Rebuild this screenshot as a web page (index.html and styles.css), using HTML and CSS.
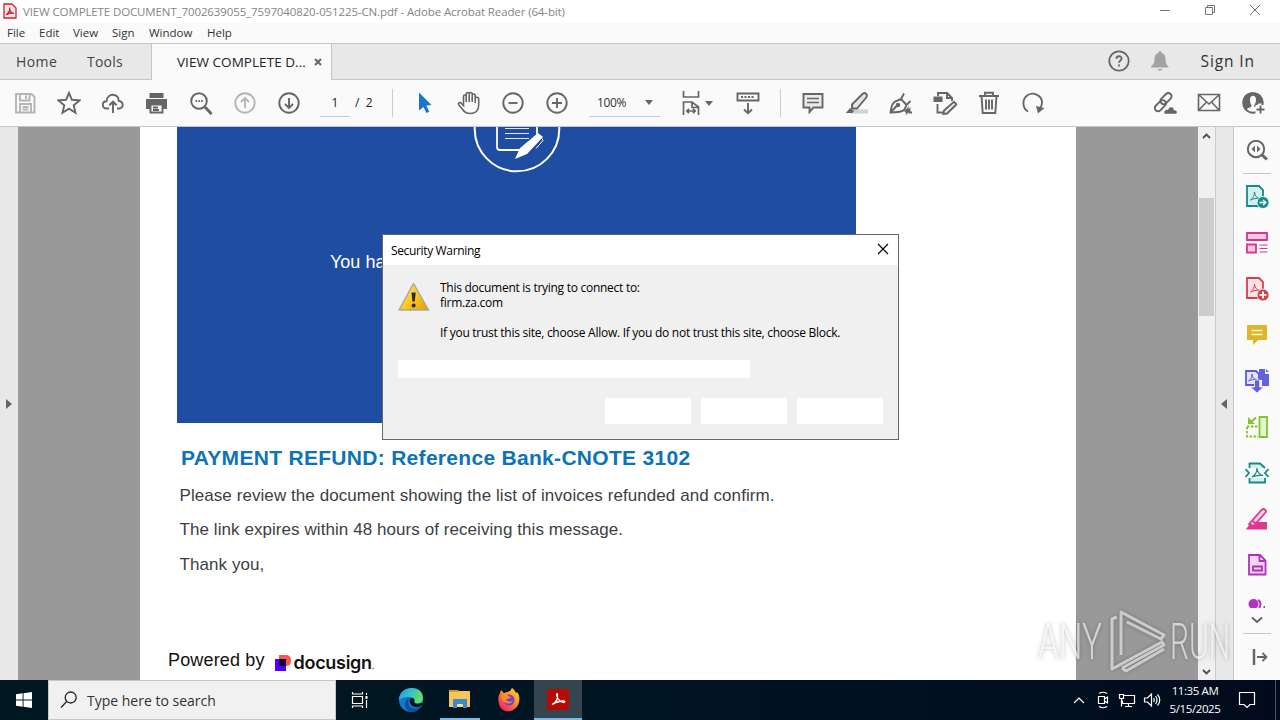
FILE: index.html
```html
<!DOCTYPE html>
<html lang="en">
<head>
    <meta charset="UTF-8">
    <title>Adobe Acrobat Reader</title>
    <link rel="stylesheet" href="styles.css">
</head>
<body>
<div class="screen">

    <header class="titlebar">
        <svg class="app-icon" width="14" height="16" viewBox="0 0 14 16"><path d="M1 1h8l4 4v10H1z" fill="#ffe9e8" stroke="#d3202c" stroke-width="1.3"/><path d="M3 12c3-2 4-5 3.6-7.500C6.500 8 8 10 11 10.300 8 9.500 5 10.500 3 12z" fill="none" stroke="#d3202c" stroke-width="1.300"/></svg>
        <span class="window-title">VIEW COMPLETE DOCUMENT_7002639055_7597040820-051225-CN.pdf - Adobe Acrobat Reader (64-bit)</span>
        <div class="window-buttons">
            <svg width="12" height="12" viewBox="0 0 12 12"><path d="M1 6.500h10"/></svg>
            <svg width="12" height="12" viewBox="0 0 12 12"><path d="M1.500 3.500h7v7h-7zM3.500 3.500v-2h7v7h-2"/></svg>
            <svg width="12" height="12" viewBox="0 0 12 12"><path d="M1 1l10 10M11 1L1 11"/></svg>
        </div>
    </header>

    <nav class="menubar">
        <span class="m-file">File</span><span class="m-edit">Edit</span><span class="m-view">View</span><span class="m-sign">Sign</span><span class="m-window">Window</span><span>Help</span>
    </nav>

    <div class="tabs">
        <span class="tab-home">Home</span>
        <span class="tab-tools">Tools</span>
        <div class="tab-active">
            <span class="tab-label">VIEW COMPLETE D...</span>
            <svg width="8" height="8" viewBox="0 0 8 8"><path d="M1 1l6 6M7 1L1 7" stroke="#666" stroke-width="2"/></svg>
        </div>
        <div class="account">
            <svg width="24" height="24" viewBox="0 0 24 24"><circle cx="12" cy="12" r="9.700" fill="none" stroke="#666" stroke-width="1.800"/><path d="M9.300 9.800c.1-3.400 5.400-3.300 5.300-.2-.1 2-2.500 1.900-2.500 4.200M12 15.500v2" fill="none" stroke="#666" stroke-width="1.800"/></svg>
            <svg class="bell" width="18" height="20" viewBox="0 0 18 20"><path d="M9 0c1 0 1.500.8 1.500 1.700C13.500 2.500 14.500 5 14.500 8c0 4 .8 5.500 3 7.500v1H0v-1C2.500 13.500 3.500 12 3.500 8c0-3 1-5.500 4-6.300C7.500.8 8 0 9 0zM6.500 18h5c-.5 2-4.500 2-5 0z" fill="#a3a3a3"/></svg>
            <span class="sign-in">Sign In</span>
        </div>
    </div>

    <div class="toolbar">
        <div class="tool dim"><svg viewBox="0 0 24 24"><path d="M3 3h15.500L21.500 6v15.500H3zM7 3v6.500h9.500V3M13 4.500V8M7 21v-8h11v8M9.500 16h6M9.500 18.500h6"/></svg></div>
        <div class="tool"><svg viewBox="0 0 24 24"><path d="M12 1.800l2.900 7 7.600.6-5.800 4.900 1.800 7.400-6.500-4-6.500 4 1.800-7.400-5.800-4.900 7.600-.6z"/></svg></div>
        <div class="tool"><svg viewBox="0 0 24 24"><path d="M8 17.500H6C.5 17.500.5 10.500 5.500 10.300 5.500 6.500 9 3 13 4c3 .5 4.700 3 4.700 6 5.300.5 5.300 7.500.3 7.500h-2M12 22V11M8.300 14.300L12 10.700l3.700 3.600"/></svg></div>
        <div class="tool"><svg viewBox="0 0 24 24"><path d="M4.500 2h14v5h-14z" fill="#666" stroke="none"/><path d="M1 8h21v10h-4v-4H5v4H1z" fill="#666" stroke="none"/><path d="M5.500 13.500h12v8h-12zM8 16.500h5M8 19h6"/></svg></div>
        <div class="tool"><svg viewBox="0 0 24 24"><circle cx="10" cy="10" r="7.800"/><path d="M16 16l6.500 7" stroke-width="2.800"/><path d="M6.500 10h1.600M9.300 10h1.600M12.100 10h1.600"/></svg></div>
        <div class="tool dim"><svg viewBox="0 0 24 24"><circle cx="12" cy="12" r="9.700"/><path d="M12 17V7M8 11l4-4 4 4"/></svg></div>
        <div class="tool"><svg viewBox="0 0 24 24"><circle cx="12" cy="12" r="9.700"/><path d="M12 7v10M8 13l4 4 4-4"/></svg></div>
        <div class="page-nav"><span class="page-input">1</span><span class="page-total">/&nbsp; 2</span></div>
        <div class="divider"></div>
        <div class="tool"><svg viewBox="0 0 24 24"><path d="M6 1.500L18.500 14l-5.200.5 3 6.200-3 1.300-2.700-6L6 19.500z" fill="#1c73cc" stroke="none"/></svg></div>
        <div class="tool"><svg viewBox="0 0 24 24"><path d="M6.500 14.500V5.500c0-2 2.700-2 2.700 0V11 3c0-2 3-2 3 0v8-8c0-2 3-2 3 0v8-6.500c0-2 3-2 3 0V12 7.500c0-2 3.500-1.500 3.500 0V14c0 5.500-3.500 8.500-8.500 8.500-4 0-6-1.500-7.500-4L1.800 14C.8 12 3 10.500 4.500 12.500z" stroke-width="1.600"/></svg></div>
        <div class="tool"><svg viewBox="0 0 24 24"><circle cx="12" cy="12" r="9.700"/><path d="M7.500 12h9"/></svg></div>
        <div class="tool"><svg viewBox="0 0 24 24"><circle cx="12" cy="12" r="9.700"/><path d="M7 12h10M12 7v10"/></svg></div>
        <div class="zoom"><span>100%</span><i class="caret"></i></div>
        <div class="tool fit"><svg viewBox="0 0 24 24"><path d="M4.500 0v6h15V0M4.500 24V11h8.500l6.500 5v8M13 11v5.500h6M8 20h8M10 17.800L7.800 20l2.200 2.200M14 17.800l2.200 2.200-2.200 2.200" stroke-width="1.700"/></svg><i class="caret"></i></div>
        <div class="tool"><svg viewBox="0 0 24 24"><path d="M1.500 2.500h21v7h-21zM12 12v10M8 18.500l4 3.700 4-3.700"/><path d="M5 6h14" stroke-dasharray="2 1.500"/></svg></div>
        <div class="divider"></div>
        <div class="tool"><svg viewBox="0 0 24 24"><path d="M2.500 3h19v13.500h-9L8.500 21v-4.500h-6z" fill="#ebebeb"/><path d="M6 7.500h12M6 11.500h12" stroke-width="1.300"/></svg></div>
        <div class="tool"><svg viewBox="0 0 24 24"><path d="M9 18.500h14v4H5z" fill="#d2d2d2" stroke="none"/><path d="M7 13.500L17.500 3c2.500-2.300 5.700.5 3.700 3.500L12 17.500H7.500zM7 14v3.500h4" fill="#e6e6e6"/><path d="M5 17l4 3-1.500 2H.8z" fill="#666" stroke="none"/></svg></div>
        <div class="tool"><svg viewBox="0 0 24 24"><path d="M1.500 21.500c.5-5 1.500-9 4.500-11l6-2.500 5.500 6-2 4.500c-2 2-8 3-14 3zM2 21l6-6.500M12 8l3-5.500M17.500 14l4-4M16 21l2.500-3-.5 3.500 2.500-3v3h2.500"/><circle cx="9" cy="14" r="1.300" fill="#666"/></svg></div>
        <div class="tool"><svg viewBox="0 0 24 24"><path d="M.5 5.500h9v5.500h-9z" fill="#666" stroke="none"/><path d="M5 5V2h9l5 5v3M14 2v5h5M4.500 13v8.500h5.500"/><path d="M21 10.800l2.500 2.500L14 22.500l-3.700.5.700-3.500z" fill="#eee"/></svg></div>
        <div class="tool"><svg viewBox="0 0 24 24"><path d="M2 5h20M8 4V1.700h8V4M4.500 5l1.200 17h12.600l1.200-17M9 8.500v10M12 8.500v10M15 8.500v10"/></svg></div>
        <div class="tool"><svg viewBox="0 0 24 24"><path d="M7 20.500C1 17 1 8 6.500 4.300c6-4 14.500.2 14.500 7.200 0 2-.5 3.500-1.500 5"/><path d="M15 15l8.500 2-6.500 5.500z" fill="#666" stroke="none"/></svg></div>
        <div class="share">
            <div class="tool"><svg viewBox="0 0 24 24"><g transform="rotate(-45 10 11)"><rect x="8" y="7.500" width="13" height="6.500" rx="3.200"/><rect x="-1" y="8.500" width="13" height="6.500" rx="3.200"/></g><path d="M11 22.500c0-3 1.500-4.500 4-4 1.500-4 6-3 6 .5 4 0 4 4 1 4H12z" fill="#666" stroke="#fafafa" stroke-width=".5"/></svg></div>
            <div class="tool"><svg viewBox="0 0 24 24"><path d="M1.500 3.500h21v16h-21zM2 4l10 9L22 4M2 19l7.500-8M22 19l-7.500-8" stroke-width="1.600"/></svg></div>
            <div class="tool"><svg viewBox="0 0 24 24"><path d="M10 1.500c9-1 13 5 12 11h-4.500L15 16l-2-.5c-1-.5 2-2 2-7 0-5-6-5-6 0s2 5.500 1.500 7c-.500 1-4 1-5 3.500l2.500 2c-8-3-9.500-18 2-19.500z" fill="#666" stroke="none"/><circle cx="12" cy="12" r="9.700"/><path d="M14.500 14h9.500v10h-9.500z" fill="#fafafa" stroke="none"/><path d="M19.500 14.500v8M15.500 18.500h8"/></svg></div>
        </div>
    </div>

    <main class="workspace">
        <aside class="left-strip"><i class="arrow-right"></i></aside>
        <section class="viewer">
            <article class="page">
                <div class="banner">
                    <svg class="badge" width="90" height="46" viewBox="0 0 90 46"><circle cx="45" cy="2" r="42.300" fill="none" stroke="#fff" stroke-width="2"/><path d="M25 0v20q0 3 3 3h23M65 0v9" fill="none" stroke="#fff" stroke-width="1.800"/><path d="M33 1.500h24M33 6.500h24M33 11.500h24" stroke="#dfe7f5" stroke-width="1.200"/><path d="M43 32l5-11L66 6l5 4-16 17z" fill="#fff"/><path d="M70 11.500l1 2-7 8" fill="none" stroke="#fff"/></svg>
                    <p>You have</p>
                </div>
                <h1>PAYMENT REFUND: Reference Bank-CNOTE 3102</h1>
                <p class="body-text line-review">Please review the document showing the list of invoices refunded and confirm.</p>
                <p class="body-text line-link">The link expires within 48 hours of receiving this message.</p>
                <p class="body-text line-thanks">Thank you,</p>
                <div class="powered">
                    <span>Powered by</span>
                    <svg width="17" height="18" viewBox="0 0 17 18"><path d="M4 1h7q5 0 5 5.500T11 12H4z" fill="#ff5252"/><path d="M0 5h11v12H0z" fill="#4c00ff"/><path d="M4 5h7v7H4z" fill="#130032"/></svg>
                    <b>docusign</b><small>.</small>
                </div>
            </article>
        </section>
        <div class="scrollbar">
            <svg class="scroll-arrow" width="9" height="6" viewBox="0 0 9 6"><path d="M1 5l3.500-3.500L8 5"/></svg>
            <div class="thumb"></div>
            <svg class="scroll-arrow end" width="9" height="6" viewBox="0 0 9 6"><path d="M1 1l3.500 3.500L8 1"/></svg>
        </div>
        <div class="right-strip"><i class="arrow-left"></i></div>
        <aside class="rail">
            <div class="rail-item"><svg viewBox="0 0 24 24" stroke="#666"><circle cx="11" cy="11" r="8.200" stroke-width="2"/><path d="M17 17l5 4.500" stroke-width="3"/><path d="M10 7.500L6.500 11l3.500 3.500zM12 7.500l3.500 3.500-3.500 3.500z" fill="#666" stroke="none"/></svg></div>
            <hr>
            <div class="rail-item"><svg viewBox="0 0 24 24" stroke="#168a88"><path d="M2 1h12l4 4v16H2z" fill="#d6efee"/><path d="M5.500 15c3-2 4-5 4-8 .5 4 2 5.500 5 6.500-3-.5-6 .2-9 1.500z" stroke-width="1"/><circle cx="18" cy="17.500" r="6" fill="#168a88" stroke="#fafafa" stroke-width=".8"/><path d="M14.500 17.500h6M18 15l2.700 2.500L18 20" stroke="#fff" stroke-width="1.600"/></svg></div>
            <div class="rail-item"><svg viewBox="0 0 24 24" stroke="#d43791"><path d="M2 2h20v7H2zM2 13.500h9v8H2z" fill="#f9c8e4"/><path d="M14.500 14h8M14.500 17.500h8M14.500 21h8" stroke-width="1.200"/></svg></div>
            <div class="rail-item"><svg viewBox="0 0 24 24" stroke="#d93d4f"><path d="M2 1h12l4 4v16H2z" fill="#fde4e3"/><path d="M5.500 15c3-2 4-5 4-8 .5 4 2 5.500 5 6.500-3-.5-6 .2-9 1.500z" stroke-width="1"/><circle cx="18" cy="18" r="6" fill="#d93d4f" stroke="#fafafa" stroke-width=".8"/><path d="M14.500 18h7M18 14.500v7" stroke="#fff" stroke-width="1.800"/></svg></div>
            <div class="rail-item"><svg viewBox="0 0 24 24"><path d="M2 2h20v15H13l-5 5v-5H2z" fill="#dfb529"/><path d="M6.500 7.500h11M6.500 11.500h11" stroke="#fff4cc" stroke-width="1.600"/></svg></div>
            <div class="rail-item"><svg viewBox="0 0 24 24" stroke="#5a5ad6"><path d="M1 2h10l3 3v11H1z" fill="#e4e3ff"/><path d="M3.500 12c2.500-1.500 3.500-4 3.500-7 .5 3.500 1.500 5 4.500 5.500-2.500-.3-5 .2-8 1.500z" stroke-width="1"/><path d="M14 0h6v5h4v12h-7v-6h-3zM21 0l3 3h-3z" fill="#6262df" stroke="none"/><path d="M9.500 11h5v7h4l-6.500 6-6.500-6h4z" fill="#6262df" stroke="#fafafa" stroke-width=".7"/></svg></div>
            <div class="rail-item"><svg viewBox="0 0 24 24" stroke="#82c331"><path d="M14.500 2h7.500v20h-7.500z" fill="#e4f6cc"/><path d="M2 11.500h11M2 12v9.500h11" stroke-dasharray="2.500 1.500"/><path d="M11 2.500L5 8" /><path d="M3 2v7h7z" fill="#82c331" stroke="none"/></svg></div>
            <div class="rail-item"><svg viewBox="0 0 24 24" stroke="#168a88"><path d="M4.500 7V2.500H15L20 7M4.500 17v4.500H20V17" fill="#d6efee"/><path d="M7 16c3.500-2 5-5 5-9 .5 5 3 7 6 7.500-4-.5-7.500 0-11 1.500z" stroke-width="1.200"/><path d="M.5 8L4 12l-3.500 4M23.500 8L20 12l3.500 4"/></svg></div>
            <div class="rail-item"><svg viewBox="0 0 24 24" stroke="#da398e"><path d="M4 17L17 2.500c2-1.500 5 1 3.500 3L8 19.500zM7 13.500l4 3.500" fill="#fad0e6"/><path d="M5.500 16l4 3 3-4H22v7.500H.8z" fill="#da398e" stroke="none"/></svg></div>
            <div class="rail-item"><svg viewBox="0 0 24 24" stroke="#b130bd"><path d="M4 2h11l5.500 5.500v14H4z" fill="#f6d7f8"/><path d="M14.500 2v6H20M8 13.500h9v4H8z"/></svg></div>
            <div class="rail-item cut"><svg viewBox="0 0 24 9"><circle cx="8.500" cy="5" r="5" fill="#b135c2"/><path d="M13 1c3 1 3 6 1 8" fill="none" stroke="#b135c2" stroke-width="2"/><path d="M18.500 7h1.500v2h-1.500z" fill="#b135c2"/></svg></div>
            <svg class="more" width="12" height="8" viewBox="0 0 12 8"><path d="M1 1.500l5 4.500 5-4.500"/></svg>
            <hr>
            <div class="rail-item"><svg viewBox="0 0 24 24" stroke="#666"><path d="M9 4v16" stroke-width="2.500"/><path d="M12 12h9M17.500 8l4 4-4 4"/></svg></div>
        </aside>
    </main>

    <footer class="taskbar">
        <div class="start"><svg width="16" height="16" viewBox="0 0 16 16"><path d="M0 2.200l6.600-.9v6.200H0zM7.500 1.200L16 0v7.500H7.500zM0 8.500h6.600v6.200L0 13.800zM7.500 8.500H16V16l-8.500-1.200z" fill="#fff"/></svg></div>
        <div class="search">
            <svg width="18" height="18" viewBox="0 0 18 18"><circle cx="10.700" cy="6.500" r="5.500"/><path d="M6.700 10.500L1 16.500"/></svg>
            <span>Type here to search</span>
        </div>
        <div class="task"><svg width="18" height="18" viewBox="0 0 18 18"><path d="M1.500 5.500h10v7h-10zM1.500 1v2h10V1M1.500 17v-2h10v2M15.500 2v2M15.500 9v8" fill="none" stroke="#fff" stroke-width="1.200"/><path d="M14.500 5h2v3h-2z" fill="#fff"/></svg></div>
        <div class="task edge"><svg width="26" height="26" viewBox="0 0 26 26">
            <defs><linearGradient id="edge-top" x1="0" y1="0" x2="1" y2=".4"><stop offset="0" stop-color="#239bd8"/><stop offset=".5" stop-color="#35c1cb"/><stop offset="1" stop-color="#68dc65"/></linearGradient></defs>
            <circle cx="13" cy="13" r="12" fill="#1679cb"/><path d="M1 13C1-2 25-3 25 11c0 5-6 7-9 4.500 3-6-7-8-15-2.500z" fill="url(#edge-top)"/><path d="M11 11c-3 8 4 14 12 8l1 0c-3 4-7 6-11 6-6-1-9-11-2-14z" fill="#114f9c"/><path d="M11.500 13.500c0-3 4-3.500 5-.5-1 3 1 5 7 3l1.500 1c-4 5-13 4-13.500-3.500z" fill="#001521"/></svg></div>
        <div class="task open"><svg width="24" height="22" viewBox="0 0 24 22"><path d="M1 2h8l2 1h11v16H1z" fill="#f6c65b"/><path d="M1 2h8l1.500 2H1z" fill="#dc9825"/><path d="M5 11h14v9h-4v-4H9v4H5z" fill="#3b8bc7"/><path d="M9.500 16h5v3h-5z" fill="#ffe28f"/></svg></div>
        <div class="task"><svg width="24" height="24" viewBox="0 0 24 24">
            <defs><linearGradient id="fox" x1="1" y1="0" x2=".2" y2="1"><stop offset="0" stop-color="#ffe226"/><stop offset=".5" stop-color="#ff8a20"/><stop offset="1" stop-color="#f5156c"/></linearGradient></defs>
            <path d="M3 5l1-3 3 3 3-1 3-1 2-3c2 1 3 3 4 5l1-1c3 3 3 9 1 13-5 9-17 8-19-1-1-4-1-8 1-11z" fill="url(#fox)"/><circle cx="12" cy="12" r="5.500" fill="#7542cf"/><path d="M4 7c3-2 6-1 7 1l3 1c-1 2-4 1-5 3 2 2 4 2 7 1-3 5-12 2-12-6z" fill="#ff8c26"/></svg></div>
        <div class="task current"><svg width="22" height="22" viewBox="0 0 22 22"><rect y="1" width="22" height="21" rx="3" fill="#b60b00"/><path d="M5 16.500c4-2 6-6 5.500-10-.5-2-2 0 .5 4 2 3 4 4 6 4 1.500-.500 1-2-2-1.500-4 .500-7 1.500-10 3.500z" fill="none" stroke="#fff" stroke-width="1.300"/></svg></div>
        <div class="tray">
            <svg width="12" height="24" viewBox="0 0 12 24"><path d="M1 15l5-5 5 5"/></svg>
            <svg width="16" height="24" viewBox="0 0 16 24"><path d="M3.500 8.500h6v7h-6zM9.500 11l3-2v6l-3-2M4 5.500Q8 3 12 5.500M4 18.500Q8 21 12 18.500"/></svg>
            <svg width="18" height="24" viewBox="0 0 18 24"><path d="M5 7.500h11.500v8H4.500v-3M10.500 15.500v3M7 18.500h7M1.500 6.500h4v4h-4zM3.500 10.500v8"/></svg>
            <svg width="18" height="24" viewBox="0 0 18 24"><path d="M1.500 10h3l4-4v12l-4-4h-3zM10.500 10q1.500 2 0 4M12.500 8q3 4 0 8M14.500 6.500q4.500 5.500 0 11"/></svg>
            <div class="clock"><span>11:35 AM</span><span>5/15/2025</span></div>
            <svg class="notice" width="18" height="24" viewBox="0 0 18 24"><path d="M1.500 4.500h15v12h-4.500l-3 3-3-3H1.500z"/></svg>
            <i class="show-desktop"></i>
        </div>
    </footer>

    <div class="dialog">
        <div class="dialog-title"><span>Security Warning</span><svg width="12" height="12" viewBox="0 0 12 12"><path d="M1 1l10 10M11 1L1 11" stroke="#000" stroke-width="1.100"/></svg></div>
        <div class="dialog-message">
            <svg class="warning" width="32" height="30" viewBox="0 0 32 30"><defs><linearGradient id="warn" x1="0" y1="0" x2="1" y2="1"><stop offset="0" stop-color="#ffe96b"/><stop offset=".55" stop-color="#fcc818"/><stop offset="1" stop-color="#e89a05"/></linearGradient></defs><path d="M15.500 1.500L30.500 28H1z" fill="url(#warn)" stroke="#a9a9a2" stroke-width="1.500" stroke-linejoin="round"/><path d="M13.500 10.500h4.200l-.9 9h-2.400z" fill="#252c36"/><circle cx="15.600" cy="23.500" r="2" fill="#252c36"/></svg>
            <div class="dialog-text"><p class="connect">This document is trying to connect to:</p><p class="site">firm.za.com</p><p class="trust">If you trust this site, choose Allow. If you do not trust this site, choose Block.</p></div>
        </div>
        <div class="remember"></div>
        <div class="dialog-buttons"><button></button><button></button><button></button></div>
    </div>

    <svg class="watermark" width="210" height="70" viewBox="0 0 210 70">
        <text x="3" y="52" textLength="64" lengthAdjust="spacingAndGlyphs">ANY</text>
        <path d="M82 10l-5 2v50l50-27M86 48V5l43 23-3 4L92 15M87 61l42-23-3-4M87 61l4 3 38-22"/>
        <text x="135" y="52" textLength="60" lengthAdjust="spacingAndGlyphs">RUN</text>
    </svg>
</div>
</body>
</html>
```
FILE: styles.css
```css
* {
    box-sizing: border-box;
}
body {
    margin: 0;
    font-family: "Open Sans", "Noto Sans", sans-serif;
    font-size: 12px;
    color: #333;
}
p, h1 {
    margin: 0;
}
svg {
    display: block;
    flex-shrink: 0;
}
span {
    white-space: nowrap;
}
.screen {
    position: relative;
    width: 1280px;
    height: 720px;
    overflow: hidden;
    display: flex;
    flex-direction: column;
    background: #fff;
}

/* title and menu */
.titlebar {
    display: flex;
    align-items: center;
    height: 23px;
    padding: 0 19px 0 3px;
    background: #fff;
}
.app-icon {
    margin-top: -2px;
}
.window-title {
    margin-left: 6px;
    color: #858585;
    font-size: 11.5px;
    letter-spacing: -0.12px;
}
.window-buttons {
    display: flex;
    gap: 33px;
    margin-left: auto;
    margin-top: -3px;
}
.window-buttons svg {
    fill: none;
    stroke: #777;
}
.menubar {
    display: flex;
    align-items: center;
    height: 20px;
    padding: 0 0 2px 7px;
    background: #fafafa;
    font-size: 11.5px;
}
.m-file { width: 32px; }
.m-edit { width: 34px; }
.m-view { width: 39px; }
.m-sign { width: 37px; }
.m-window { width: 58px; }

/* tabs */
.tabs {
    display: flex;
    align-items: center;
    height: 37px;
    border-top: 1px solid #c6c6c6;
    border-bottom: 1px solid #c6c6c6;
    background: #e8e8e8;
    font-size: 14px;
    color: #444;
}
.tab-home {
    width: 71px;
    margin-left: 16px;
    letter-spacing: 0.4px;
}
.tab-tools {
    width: 64px;
    letter-spacing: 0.2px;
}
.tab-active {
    display: flex;
    align-items: center;
    justify-content: space-between;
    width: 181px;
    height: 36px;
    margin-bottom: -1px;
    padding: 0 9px 0 25px;
    border-left: 1px solid #c6c6c6;
    border-right: 1px solid #c6c6c6;
    background: #fafafa;
    color: #222;
}
.tab-label {
    font-size: 13.5px;
    letter-spacing: 0.05px;
}
.account {
    display: flex;
    align-items: center;
    margin-left: auto;
    margin-right: 25px;
    padding-bottom: 2px;
}
.bell {
    margin: 0 32px 0 20px;
}
.sign-in {
    font-size: 15.5px;
    letter-spacing: 0.9px;
    color: #333;
}

/* toolbar */
.toolbar {
    display: flex;
    align-items: center;
    height: 47px;
    padding-left: 3px;
    border-bottom: 1px solid #c6c6c6;
    background: #fafafa;
}
.tool {
    display: flex;
    align-items: center;
    justify-content: center;
    width: 44px;
}
.tool svg {
    width: 24px;
    height: 24px;
    fill: none;
    stroke: #666;
    stroke-width: 1.9;
}
.tool.dim svg {
    stroke: #b5b5b5;
}
.page-nav {
    display: flex;
    width: 71px;
    padding-left: 9px;
    color: #222;
}
.page-input {
    width: 30px;
    height: 28px;
    line-height: 28px;
    border-bottom: 1px solid #c5c9dc;
    text-align: center;
}
.page-total {
    line-height: 28px;
    margin-left: 5px;
}
.divider {
    width: 1px;
    height: 28px;
    margin: 0 10px;
    background: #ccc;
}
.zoom {
    display: flex;
    align-items: center;
    justify-content: space-between;
    width: 71px;
    height: 28px;
    margin: 0 9px 0 10px;
    padding: 0 7px 0 8px;
    border-bottom: 1px solid #c5c9dc;
    color: #333;
    letter-spacing: -0.4px;
}
.caret {
    border: 4px solid transparent;
    border-top: 5px solid #666;
    border-bottom: 0;
}
.tool.fit {
    width: 57px;
    padding-right: 3px;
    gap: 2px;
}
.share {
    display: flex;
    margin-left: auto;
    margin-right: 5px;
}

/* document area */
.workspace {
    display: flex;
    height: 553px;
}
.left-strip {
    display: flex;
    align-items: center;
    width: 18px;
    padding-left: 6px;
    background: #e8e8e8;
}
.arrow-right {
    border: 5px solid transparent;
    border-left: 6px solid #666;
    border-right: 0;
}
.viewer {
    width: 1180px;
    padding: 0 122px;
    background: #999;
}
.page {
    height: 553px;
    padding-left: 37px;
    background: #fff;
    font-family: "Liberation Sans", Arial, sans-serif;
}
.banner {
    width: 679px;
    height: 296px;
    background: #1f4da1;
    color: #fff;
    font-size: 18px;
}
.badge {
    margin-left: 295px;
}
.banner p {
    padding: 79px 0 0 153px;
}
.page h1 {
    margin: 22px 0 0 4px;
    font-size: 21px;
    line-height: 26px;
    letter-spacing: 0.3px;
    color: #0d73b7;
}
.body-text {
    margin-left: 2.5px;
    font-size: 17px;
    line-height: 20px;
    letter-spacing: 0.07px;
    color: #3e3e42;
}
.line-review { margin-top: 15px; }
.line-link { margin-top: 14px; }
.line-thanks { margin-top: 15px; }
.powered {
    display: flex;
    align-items: center;
    margin: 72px 0 0 -9px;
    font-size: 18px;
    letter-spacing: 0.15px;
    color: #111;
}
.powered svg {
    margin: 5px 2px 0 10px;
}
.powered b {
    margin-top: 5px;
    font-family: Inter, sans-serif;
    font-size: 18px;
    font-weight: 600;
    line-height: 22px;
    letter-spacing: -0.3px;
}
.powered small {
    font-size: 10px;
    margin-top: 10px;
}
.scrollbar {
    display: flex;
    flex-direction: column;
    align-items: center;
    width: 18px;
    padding: 6px 0 5px;
    border-right: 1px solid #ccc;
    background: #f0f0f0;
}
.scroll-arrow {
    fill: none;
    stroke: #505050;
    stroke-width: 1.8;
}
.thumb {
    width: 15px;
    height: 118px;
    margin-top: 59px;
    background: #cdcdcd;
}
.scroll-arrow.end {
    margin-top: auto;
}
.right-strip {
    display: flex;
    align-items: center;
    width: 18px;
    padding-left: 5px;
    border-right: 1px solid #c6c6c6;
    background: #e8e8e8;
}
.arrow-left {
    border: 5px solid transparent;
    border-right: 6px solid #666;
    border-left: 0;
}
.rail {
    display: flex;
    flex-direction: column;
    align-items: center;
    width: 46px;
    background: #fafafa;
}
.rail hr {
    flex-shrink: 0;
    width: 28px;
    height: 1px;
    margin: 0;
    border: 0;
    background: #c6c6c6;
}
.rail-item {
    display: flex;
    align-items: center;
    flex-shrink: 0;
    height: 46px;
}
.rail-item svg {
    width: 24px;
    height: 24px;
    fill: none;
    stroke-width: 1.8;
}
.rail-item.cut {
    height: 20px;
    align-items: flex-end;
}
.rail-item.cut svg {
    height: 9px;
}
.more {
    margin: 8px 0 9px;
    fill: none;
    stroke: #666;
    stroke-width: 2;
}

/* security dialog */
.dialog {
    position: absolute;
    left: 382px;
    top: 234px;
    width: 517px;
    height: 206px;
    border: 1px solid #666;
    background: #f0f0f0;
    color: #000;
}
.dialog-title {
    display: flex;
    align-items: center;
    justify-content: space-between;
    height: 30px;
    padding: 0 9px 0 8px;
    background: #fff;
    letter-spacing: -0.35px;
}
.dialog-title svg {
    margin-top: -2px;
}
.dialog-message {
    display: flex;
    padding: 15px 0 0 15px;
}
.warning {
    margin-top: 2px;
}
.dialog-text {
    margin-left: 10px;
    line-height: 15px;
    letter-spacing: -0.27px;
}
.trust {
    margin-top: 15px;
}
.remember {
    width: 352px;
    height: 18px;
    margin: 20px 0 0 15px;
    background: #fff;
}
.dialog-buttons {
    display: flex;
    justify-content: flex-end;
    gap: 10px;
    margin: 20px 15px 0 0;
}
.dialog-buttons button {
    width: 86px;
    height: 26px;
    padding: 0;
    border: 0;
    background: #fff;
}

/* taskbar */
.taskbar {
    display: flex;
    height: 40px;
    background: linear-gradient(90deg, #001720, #001522 50%, #020b1c);
}
.start {
    display: flex;
    align-items: center;
    justify-content: center;
    width: 48px;
}
.search {
    display: flex;
    align-items: center;
    width: 288px;
    padding-left: 11px;
    border: 1px solid #c9c9c9;
    background: #f1f1f1;
    font-size: 14px;
    color: #333;
}
.search svg {
    fill: none;
    stroke: #222;
    stroke-width: 1.3;
}
.search span {
    margin-left: 9px;
}
.task {
    display: flex;
    align-items: center;
    justify-content: center;
    width: 48px;
}
.task.edge {
    width: 56px;
    padding-right: 2px;
}
.task.open {
    width: 40px;
    border-bottom: 2px solid #76b9ed;
}
.task.open + .task {
    width: 54px;
    padding-left: 4px;
}
.task.current {
    background: #34454f;
    border-bottom: 2px solid #76b9ed;
}
.tray {
    display: flex;
    align-items: center;
    margin-left: auto;
    color: #fff;
}
.tray svg {
    fill: none;
    stroke: #fff;
    stroke-width: 1.2;
    margin-right: 7px;
}
.tray svg:first-child {
    margin-right: 10px;
}
.clock {
    display: flex;
    flex-direction: column;
    align-items: center;
    width: 54px;
    line-height: 18px;
    font-size: 11.5px;
    letter-spacing: -0.4px;
}
.tray .notice {
    margin: 0 19px 0 16px;
}
.show-desktop {
    width: 5px;
    height: 40px;
    border-left: 1px solid #4a525e;
}

.watermark {
    position: absolute;
    left: 1035px;
    top: 607px;
    filter: drop-shadow(0 0 2px rgba(0, 0, 0, 0.4));
    opacity: 0.65;
}
.watermark text {
    font-family: Roboto, sans-serif;
    font-size: 50px;
    font-weight: 300;
    fill: #f4f4f4;
}
.watermark path {
    fill: none;
    stroke: #e8e8e8;
    stroke-width: 3;
    stroke-linejoin: round;
}
```
